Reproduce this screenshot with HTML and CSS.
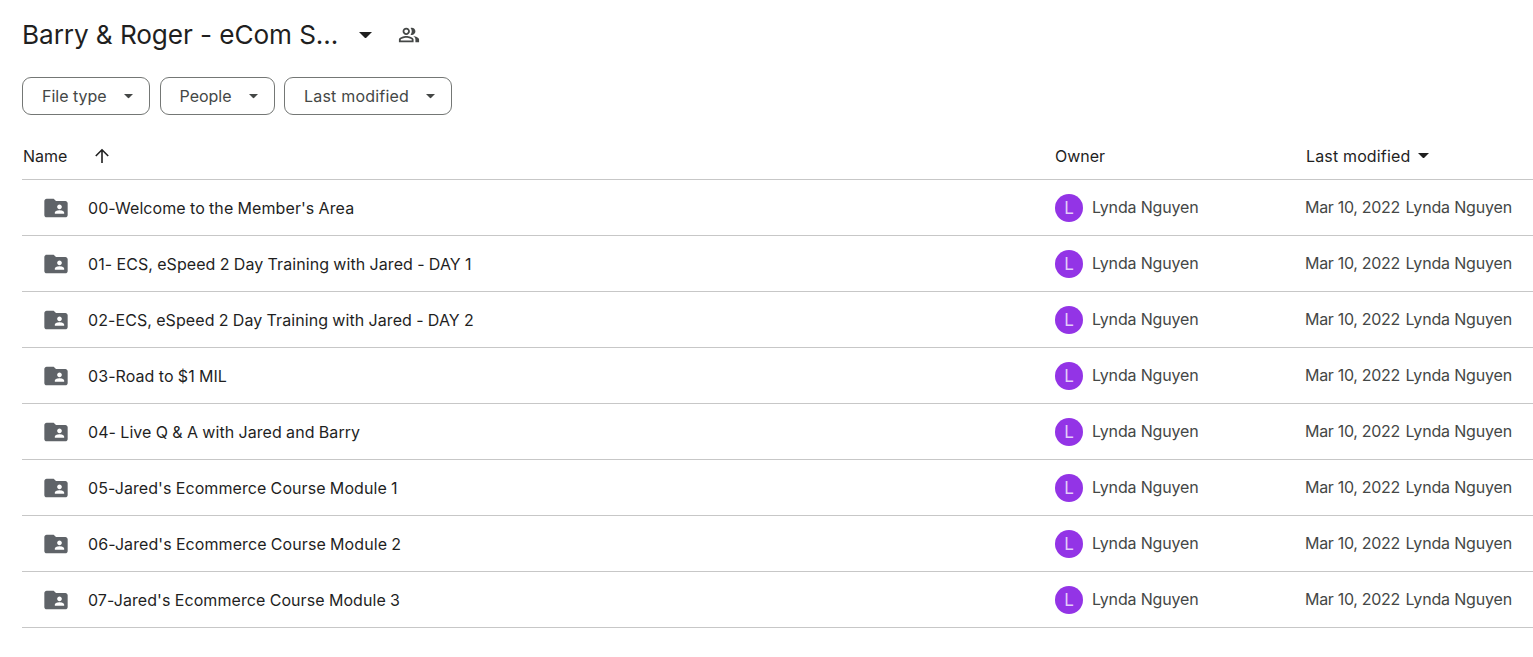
FILE: index.html
```html
<!DOCTYPE html>
<html lang="en">
<head>
<meta charset="utf-8">
<title>Barry &amp; Roger - eCom S...</title>
<link rel="stylesheet" href="styles.css">
</head>
<body>
<svg class="defs" width="0" height="0" aria-hidden="true">
  <symbol id="folder" viewBox="0 0 24 24"><path d="M10 4H4c-1.1 0-2 .9-2 2v12c0 1.1.9 2 2 2h16c1.1 0 2-.9 2-2V8c0-1.1-.9-2-2-2h-8l-2-2zm5 5c1.1 0 2 .9 2 2s-.9 2-2 2-2-.9-2-2 .9-2 2-2zm4 8h-8v-1c0-1.33 2.67-2 4-2s4 .67 4 2v1z" fill-rule="evenodd"/></symbol>
  <symbol id="caret" viewBox="0 0 10 5"><path d="M0 0l5 5 5-5z"/></symbol>
</svg>
<header class="title-row">
  <h1 class="title">Barry &amp; Roger - eCom S...</h1>
  <svg class="title-caret"><use href="#caret"/></svg>
  <svg class="shared" viewBox="0 0 24 24"><path d="M16.67 13.13C18.04 14.06 19 15.32 19 17v3h4v-3c0-2.18-3.57-3.47-6.33-3.87zM15 12c2.21 0 4-1.79 4-4s-1.79-4-4-4c-.47 0-.91.1-1.33.24C14.5 5.27 15 6.58 15 8s-.5 2.73-1.33 3.76c.42.14.86.24 1.33.24zM9 12c2.21 0 4-1.79 4-4s-1.79-4-4-4-4 1.79-4 4 1.79 4 4 4zm0-6c1.1 0 2 .9 2 2s-.9 2-2 2-2-.9-2-2 .9-2 2-2zm0 7c-2.67 0-8 1.34-8 4v3h16v-3c0-2.66-5.33-4-8-4zm6 5H3v-.99C3.2 16.29 6.3 15 9 15s5.8 1.29 6 2v1z"/></svg>
</header>
<div class="filters">
  <button class="chip chip-type">File type<svg class="chip-caret"><use href="#caret"/></svg></button>
  <button class="chip chip-people">People<svg class="chip-caret"><use href="#caret"/></svg></button>
  <button class="chip chip-mod">Last modified<svg class="chip-caret"><use href="#caret"/></svg></button>
</div>
<main class="list">
  <div class="row head">
    <div class="col-name"><span class="head-name">Name</span>
      <svg class="arrow" viewBox="0 0 16 16"><path d="M8 15V1.8M1.8 8L8 1.8 14.2 8" fill="none" stroke="currentColor" stroke-width="1.6"/></svg></div>
    <div class="col-owner">Owner</div>
    <div class="col-mod head-mod">Last modified<svg class="head-caret"><use href="#caret"/></svg></div>
  </div>
  <div class="row item"><div class="col-name"><svg class="folder"><use href="#folder"/></svg><span class="fname">00-Welcome to the Member's Area</span></div><div class="col-owner"><span class="avatar">L</span><span class="meta">Lynda Nguyen</span></div><div class="col-mod"><span class="meta date">Mar 10, 2022</span><span class="meta">Lynda Nguyen</span></div></div>
  <div class="row item"><div class="col-name"><svg class="folder"><use href="#folder"/></svg><span class="fname">01- ECS, eSpeed 2 Day Training with Jared - DAY 1</span></div><div class="col-owner"><span class="avatar">L</span><span class="meta">Lynda Nguyen</span></div><div class="col-mod"><span class="meta date">Mar 10, 2022</span><span class="meta">Lynda Nguyen</span></div></div>
  <div class="row item"><div class="col-name"><svg class="folder"><use href="#folder"/></svg><span class="fname">02-ECS, eSpeed 2 Day Training with Jared - DAY 2</span></div><div class="col-owner"><span class="avatar">L</span><span class="meta">Lynda Nguyen</span></div><div class="col-mod"><span class="meta date">Mar 10, 2022</span><span class="meta">Lynda Nguyen</span></div></div>
  <div class="row item"><div class="col-name"><svg class="folder"><use href="#folder"/></svg><span class="fname">03-Road to $1 MIL</span></div><div class="col-owner"><span class="avatar">L</span><span class="meta">Lynda Nguyen</span></div><div class="col-mod"><span class="meta date">Mar 10, 2022</span><span class="meta">Lynda Nguyen</span></div></div>
  <div class="row item"><div class="col-name"><svg class="folder"><use href="#folder"/></svg><span class="fname">04- Live Q &amp; A with Jared and Barry</span></div><div class="col-owner"><span class="avatar">L</span><span class="meta">Lynda Nguyen</span></div><div class="col-mod"><span class="meta date">Mar 10, 2022</span><span class="meta">Lynda Nguyen</span></div></div>
  <div class="row item"><div class="col-name"><svg class="folder"><use href="#folder"/></svg><span class="fname">05-Jared's Ecommerce Course Module 1</span></div><div class="col-owner"><span class="avatar">L</span><span class="meta">Lynda Nguyen</span></div><div class="col-mod"><span class="meta date">Mar 10, 2022</span><span class="meta">Lynda Nguyen</span></div></div>
  <div class="row item"><div class="col-name"><svg class="folder"><use href="#folder"/></svg><span class="fname">06-Jared's Ecommerce Course Module 2</span></div><div class="col-owner"><span class="avatar">L</span><span class="meta">Lynda Nguyen</span></div><div class="col-mod"><span class="meta date">Mar 10, 2022</span><span class="meta">Lynda Nguyen</span></div></div>
  <div class="row item"><div class="col-name"><svg class="folder"><use href="#folder"/></svg><span class="fname">07-Jared's Ecommerce Course Module 3</span></div><div class="col-owner"><span class="avatar">L</span><span class="meta">Lynda Nguyen</span></div><div class="col-mod"><span class="meta date">Mar 10, 2022</span><span class="meta">Lynda Nguyen</span></div></div>
</main>
</body>
</html>
```
FILE: styles.css
```css
* { box-sizing: border-box; }
html, body { margin: 0; padding: 0; background: #fff; overflow: hidden; }
body { height: 657px; padding-left: 22px; font-family: Inter, "Open Sans", sans-serif; font-size: 16px; color: #1f1f1f; }
.defs { position: absolute; }
.title-row { display: flex; align-items: center; height: 70px; }
.title { margin: 0 0 2px; font-size: 26.2px; font-weight: 400; width: 337px; white-space: nowrap; color: #1f1f1f; letter-spacing: -0.1px; }
.title-caret { width: 13px; height: 6.5px; fill: #1f1f1f; }
.shared { width: 22px; height: 22px; margin-left: 26px; fill: #444746; }
.filters { display: flex; gap: 10px; margin-top: 7px; }
.chip { display: flex; align-items: center; height: 38px; padding: 0 0 1px 19px; border: 1px solid #747775; border-radius: 9px; background: #fff; font: inherit; color: #444746; }
.chip-type { width: 128px; }
.chip-people { width: 115px; margin-right: -1px; padding-left: 18.5px; }
.chip-mod { width: 168px; letter-spacing: 0.2px; }
.chip-caret { width: 9px; height: 4.5px; margin-top: 2px; margin-left: auto; margin-right: 16px; fill: #444746; }
.list { margin-top: 0; }
.row { display: flex; align-items: center; height: 56px; border-bottom: 1px solid #c7c7c7; }
.head { height: 65px; padding-top: 17px; }
.col-name { display: flex; align-items: center; width: 1033px; flex: none; }
.col-owner { display: flex; align-items: center; width: 250px; flex: none; }
.col-mod { display: flex; align-items: center; flex: none; white-space: nowrap; color: #444746; }
.head .col-owner { color: #1f1f1f; }
.head-name { margin-left: 1px; }
.arrow { width: 16px; height: 16px; margin-left: 27px; color: #1f1f1f; }
.head-mod { color: #1f1f1f; letter-spacing: 0.15px; margin-left: 1px; }
.head-caret { width: 11px; height: 5.5px; margin-left: 8px; fill: #1f1f1f; }
.item .col-name { color: #1f1f1f; }
.item .col-owner { color: #444746; }
.folder { width: 28px; height: 28px; margin-left: 20px; margin-right: 18px; fill: #5f6368; }
.fname { white-space: nowrap; letter-spacing: 0.08px; word-spacing: -0.35px; }
.avatar { display: flex; align-items: center; justify-content: center; width: 28px; height: 28px; margin-right: 9px; border-radius: 50%; background: #9334e6; color: #e3ccfa; font-size: 17px; }
.meta { letter-spacing: -0.17px; margin-bottom: 2px; }
.date { letter-spacing: -0.3px; margin-right: 5.5px; }
```
